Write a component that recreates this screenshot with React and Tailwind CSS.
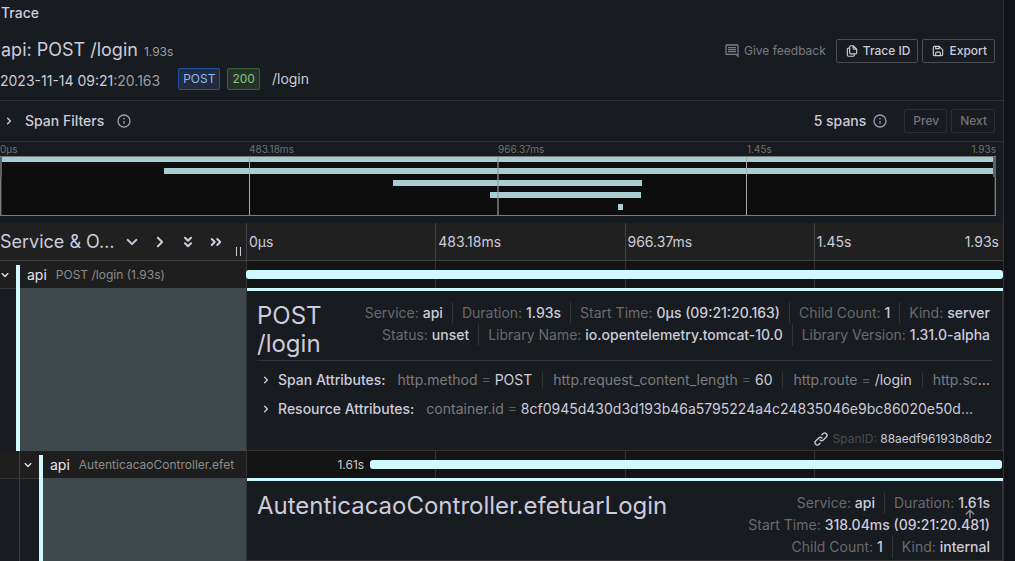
import { MdOutlineComment } from "react-icons/md";

const PATHS = {
  copy: "M21,8.94a1.31,1.31,0,0,0-.06-.27l0-.09a1.07,1.07,0,0,0-.19-.28h0l-6-6h0a1.07,1.07,0,0,0-.28-.19.32.32,0,0,0-.09,0A.88.88,0,0,0,14.05,2H10A3,3,0,0,0,7,5V6H6A3,3,0,0,0,3,9V19a3,3,0,0,0,3,3h8a3,3,0,0,0,3-3V18h1a3,3,0,0,0,3-3V9S21,9,21,8.94ZM15,5.41,17.59,8H16a1,1,0,0,1-1-1ZM15,19a1,1,0,0,1-1,1H6a1,1,0,0,1-1-1V9A1,1,0,0,1,6,8H7v7a3,3,0,0,0,3,3h5Zm4-4a1,1,0,0,1-1,1H10a1,1,0,0,1-1-1V5a1,1,0,0,1,1-1h3V7a3,3,0,0,0,3,3h3Z",
  save: "m20.71 9.29-6-6a1 1 0 0 0-.32-.21A1.09 1.09 0 0 0 14 3H6a3 3 0 0 0-3 3v12a3 3 0 0 0 3 3h12a3 3 0 0 0 3-3v-8a1 1 0 0 0-.29-.71ZM9 5h4v2H9Zm6 14H9v-3a1 1 0 0 1 1-1h4a1 1 0 0 1 1 1Zm4-1a1 1 0 0 1-1 1h-1v-3a3 3 0 0 0-3-3h-4a3 3 0 0 0-3 3v3H6a1 1 0 0 1-1-1V6a1 1 0 0 1 1-1h1v3a1 1 0 0 0 1 1h6a1 1 0 0 0 1-1V6.41l4 4Z",
  info: "M12,2A10,10,0,1,0,22,12,10.01114,10.01114,0,0,0,12,2Zm0,18a8,8,0,1,1,8-8A8.00917,8.00917,0,0,1,12,20Zm0-8.5a1,1,0,0,0-1,1v3a1,1,0,0,0,2,0v-3A1,1,0,0,0,12,11.5Zm0-4a1.25,1.25,0,1,0,1.25,1.25A1.25,1.25,0,0,0,12,7.5Z",
  down: "M17,9.17a1,1,0,0,0-1.41,0L12,12.71,8.46,9.17a1,1,0,0,0-1.41,0,1,1,0,0,0,0,1.42l4.24,4.24a1,1,0,0,0,1.42,0L17,10.59A1,1,0,0,0,17,9.17Z",
  right: "M14.83,11.29,10.59,7.05a1,1,0,0,0-1.42,0,1,1,0,0,0,0,1.41L12.71,12,9.17,15.54a1,1,0,0,0,0,1.41,1,1,0,0,0,.71.29,1,1,0,0,0,.71-.29l4.24-4.24A1,1,0,0,0,14.83,11.29Z",
  doubleRight: "M8.46,8.29A1,1,0,1,0,7,9.71L9.34,12,7,14.29a1,1,0,0,0,0,1.42,1,1,0,0,0,.71.29,1,1,0,0,0,.75-.29l3-3a1,1,0,0,0,0-1.42Zm8.5,3-3-3a1,1,0,0,0-1.42,1.42L14.84,12l-2.3,2.29a1,1,0,0,0,0,1.42,1,1,0,0,0,.71.29,1,1,0,0,0,.71-.29l3-3A1,1,0,0,0,17,11.29Z",
  link: "M10,17.55,8.23,19.27a2.47,2.47,0,0,1-3.5-3.5l4.54-4.55a2.46,2.46,0,0,1,3.39-.09l.12.1a1,1,0,0,0,1.4-1.43A2.75,2.75,0,0,0,14,9.59a4.46,4.46,0,0,0-6.09.22L3.31,14.36a4.48,4.48,0,0,0,6.33,6.33L11.37,19A1,1,0,0,0,10,17.55ZM20.69,3.31a4.49,4.49,0,0,0-6.33,0L12.63,5A1,1,0,0,0,14,6.45l1.73-1.72a2.47,2.47,0,0,1,3.5,3.5l-4.54,4.55a2.46,2.46,0,0,1-3.39.09l-.12-.1a1,1,0,0,0-1.4,1.43,2.75,2.75,0,0,0,.23.21,4.47,4.47,0,0,0,6.09-.22l4.55-4.55A4.49,4.49,0,0,0,20.69,3.31Z",
  up: "M17.71,11.29l-5-5a1,1,0,0,0-.33-.21,1,1,0,0,0-.76,0,1,1,0,0,0-.33.21l-5,5a1,1,0,0,0,1.42,1.42L11,9.41V17a1,1,0,0,0,2,0V9.41l3.29,3.3a1,1,0,0,0,1.42,0A1,1,0,0,0,17.71,11.29Z",
};

function Icon({ name, className = "size-4" }) {
  return (
    <svg viewBox="0 0 24 24" fill="currentColor" aria-hidden="true" className={`shrink-0 ${className}`}>
      <path d={PATHS[name]} />
    </svg>
  );
}

function IconButton({ label, name, className }) {
  return (
    <button type="button" aria-label={label} className="flex shrink-0 items-center">
      <Icon name={name} className={className} />
    </button>
  );
}

const TICKS = ["0μs", "483.18ms", "966.37ms", "1.45s"];
const END = "1.93s";

const MINIMAP_BARS = [
  { x: 2, y: 1, w: 991, h: 5 },
  { x: 164, y: 12, w: 829, h: 6 },
  { x: 393, y: 24, w: 249, h: 6 },
  { x: 490, y: 36, w: 151, h: 6 },
  { x: 618, y: 48, w: 5, h: 6 },
];

function Minimap() {
  return (
    <div className="pr-[7px]">
      <div className="grid h-[14px] grid-cols-4 text-[10px] leading-[14px] text-[#717171]">
        {TICKS.map((t, i) => (
          <div key={t} className="flex justify-between">
            <span>{t}</span>
            {i === 3 && <span>{END}</span>}
          </div>
        ))}
      </div>
      <svg viewBox="0 0 996 60" preserveAspectRatio="none" className="block h-15 w-full" shapeRendering="crispEdges">
        <rect width="996" height="60" fill="#7a7a7a" />
        <rect x="1" y="1" width="994" height="58" fill="#0d0d0d" />
        <rect x="1" y="1" width="1" height="58" fill="#3a3a3a" />
        <rect x="994" y="1" width="1" height="58" fill="#3a3a3a" />
        {MINIMAP_BARS.map((b) => (
          <rect key={b.y} x={b.x} y={b.y} width={b.w} height={b.h} fill="#a8cdd0" />
        ))}
        <rect x="249" y="1" width="1" height="58" fill="#aaaaaa" />
        <rect x="497" y="1" width="2" height="58" fill="#999999" fillOpacity="0.6" />
        <rect x="746" y="1" width="1" height="58" fill="#aaaaaa" />
        <rect x="0" y="1" width="2" height="20" fill="#606060" />
        <rect x="993" y="1" width="3" height="20" fill="#606060" />
      </svg>
    </div>
  );
}

function SpanRow({ nested, service, operation, label, start, width }) {
  return (
    <div className="flex h-[27px]">
      <div className="flex w-[246px] shrink-0 bg-[#1e1e1e]">
        {nested && <div className="w-5 shrink-0 border-r border-[#404040]" />}
        <button
          type="button"
          aria-label={`Collapse ${service}`}
          className={`flex shrink-0 items-center justify-center text-[#e4e4ee] ${nested ? "w-[19px] pr-[3px]" : "w-4 pr-[6px]"}`}
        >
          <Icon name="down" className="size-4" />
        </button>
        <div className="mt-1 flex min-w-0 flex-1 items-center gap-[9px] overflow-hidden border-l-4 border-[#cff9ff] pb-1 pl-[7px] whitespace-nowrap">
          <span className="text-sm text-[#e6e6ea]">{service}</span>
          <span className="text-xs text-[#8c8c8c]">{operation}</span>
        </div>
      </div>
      <div className="relative min-w-0 flex-1 bg-[#141414]">
        <div className="absolute inset-0 grid grid-cols-4">
          {TICKS.map((t) => (
            <div key={t} className="border-l border-[#343434]" />
          ))}
        </div>
        <div className="relative flex h-full items-center">
          <div className="flex justify-end text-xs text-[#cbcbd3]" style={{ width: `${start}%` }}>
            {label && <span className="pr-[6px]">{label}</span>}
          </div>
          <div className="h-[9px] rounded-[3px] bg-[#cff9ff]" style={{ width: `${width}%` }} />
        </div>
      </div>
    </div>
  );
}

function Overview({ items }) {
  return (
    <ul className="flex min-w-0 flex-1 flex-wrap content-start justify-end text-sm leading-[22px] text-[#6a6a6e]">
      {items.map(([k, v, last]) => (
        <li key={k} className={`whitespace-nowrap pl-[9px] ${last ? "" : "border-r border-[#333336] pr-[9px]"}`}>
          {k}: <span className="font-medium text-[#ccccdc]">{v}</span>
        </li>
      ))}
    </ul>
  );
}

function AttributeRow({ title, items }) {
  return (
    <div className="flex h-[29px] items-center pl-px text-sm leading-4">
      <button type="button" className="flex shrink-0 items-center gap-1 font-medium text-[#ccccdc]">
        <Icon name="right" className="size-4" />
        {title}:
      </button>
      <ul className="flex min-w-0 overflow-hidden pl-[2px] whitespace-nowrap text-[#7c7c80]">
        {items.map(([k, v], i) => (
          <li key={k} className={`px-[10px] ${i < items.length - 1 ? "border-r border-[#333336]" : ""}`}>
            {k}
            {v && <span className="text-[#5c5c60]"> = </span>}
            <span className="text-[#ccccdc]">{v || "…"}</span>
          </li>
        ))}
      </ul>
    </div>
  );
}

function SpanDetail({ nested, title, overview, children }) {
  return (
    <div className={`flex ${nested ? "flex-1" : ""}`}>
      <div className="flex w-[246px] shrink-0 border-t border-[#343434]">
        {nested && <div className="w-5 shrink-0 border-r border-[#404040]" />}
        <div className={`shrink-0 ${nested ? "w-[19px]" : "w-4"}`} />
        <div className="-mt-px flex-1 border-l-4 border-[#cff9ff] bg-[#3e484d]" />
      </div>
      <div className="flex min-w-0 flex-1 flex-col border-b border-l border-[#343434]">
        <div className="h-[3px] bg-[#cff9ff]" />
        <div className="flex-1 border-r border-[#343434] px-[10px] pt-[11px]">
          <div className="flex pr-[2px]">
            <h2 className="w-min text-2xl leading-7 text-[#ccccdc]">{title}</h2>
            <Overview items={overview} />
          </div>
          {children}
        </div>
      </div>
    </div>
  );
}

const outlineButton =
  "flex h-6 items-center gap-1 rounded-xs border border-[#4b4c54] pr-[7px] pl-2 text-xs font-medium text-[#ccccdc]";
const disabledButton =
  "h-6 rounded-xs border border-[#2d2f34] pr-[7px] pl-2 text-xs font-medium text-[#72737c]";

export default function App() {
  return (
    <div className="flex h-screen overflow-hidden bg-[#111217] pr-[11px] font-['Inter',sans-serif] text-sm text-[#ccccdc]">
      <main className="relative flex min-w-0 flex-1 flex-col border-r border-[#2e3035] bg-[#181b1f]">
        <h6 className="px-px pt-[3px] text-sm leading-5 font-medium">Trace</h6>

        <header className="mt-3 flex h-[66px] justify-between border-b border-[#2e3035] pr-2">
          <div>
            <h1 className="flex items-baseline gap-[6px] px-px text-lg leading-[30px]">
              api: POST /login
              <small className="text-xs text-[#9d9da8]">1.93s</small>
            </h1>
            <div className="flex h-7 items-center">
              <time className="pt-1">
                2023-11-14 09:21<span className="text-[#9d9da8]">:20.163</span>
              </time>
              <span className="ml-[18px] flex h-[22px] items-center rounded-xs border border-[#1f51a4] bg-[#222c3e] px-1 text-xs text-[#8fb8f5]">
                POST
              </span>
              <span className="ml-[7px] flex h-[22px] items-center rounded-xs border border-[#33642f] bg-[#25312a] px-1 text-xs text-[#85c67d]">
                200
              </span>
              <span className="ml-3">/login</span>
            </div>
          </div>
          <div className="mt-1 flex h-6 items-center">
            <a href="#feedback" className="mr-[10px] flex items-center gap-1 text-xs text-[#797b83]">
              <MdOutlineComment className="size-4" />
              Give feedback
            </a>
            <button type="button" className={outlineButton}>
              <Icon name="copy" className="size-[14px]" />
              Trace ID
            </button>
            <button type="button" className={`ml-1 ${outlineButton}`}>
              <Icon name="save" className="size-[14px]" />
              Export
            </button>
          </div>
        </header>

        <div className="flex h-[41px] items-center border-b border-[#2e3035] pr-2 pl-px">
          <button type="button" className="flex items-center gap-2 pb-px font-medium">
            <Icon name="right" className="size-4" />
            Span Filters
          </button>
          <Icon name="info" className="ml-3 size-4 text-[#9d9da8]" />
          <span className="ml-auto font-medium">5 spans</span>
          <Icon name="info" className="ml-[6px] size-4 text-[#9d9da8]" />
          <button type="button" disabled className={`ml-4 ${disabledButton}`}>
            Prev
          </button>
          <button type="button" disabled className={`ml-1 ${disabledButton}`}>
            Next
          </button>
        </div>

        <Minimap />

        <div className="mt-[7px] flex h-[38px] shrink-0 border-b border-[#404040] bg-[#202020]">
          <div className="flex w-[246px] shrink-0 items-center">
            <span className="text-lg">Service &amp; O…</span>
            <div className="ml-[5px] flex gap-1">
              <IconButton label="Expand +1" name="down" className="size-6" />
              <IconButton label="Collapse +1" name="right" className="size-6" />
              <IconButton label="Expand all" name="doubleRight" className="size-6 rotate-90" />
              <IconButton label="Collapse all" name="doubleRight" className="size-6" />
            </div>
            <div className="mt-5 mr-[5px] ml-auto h-[9px] w-[5px] border-x border-[#cccccc]" />
          </div>
          <div className="grid flex-1 grid-cols-4">
            {TICKS.map((t, i) => (
              <div key={t} className="flex items-center justify-between border-l border-[#404040] pr-1 pl-[2px]">
                <span>{t}</span>
                {i === 3 && <span>{END}</span>}
              </div>
            ))}
          </div>
        </div>

        <SpanRow service="api" operation="POST /login (1.93s)" start={0} width={100} />
        <SpanDetail
          title="POST /login"
          overview={[
            ["Service", "api"],
            ["Duration", "1.93s"],
            ["Start Time", "0μs (09:21:20.163)"],
            ["Child Count", "1"],
            ["Kind", "server", true],
            ["Status", "unset"],
            ["Library Name", "io.opentelemetry.tomcat-10.0"],
            ["Library Version", "1.31.0-alpha", true],
          ]}
        >
          <div className="mt-[2px] border-t border-[#333336] pt-1">
            <AttributeRow
              title="Span Attributes"
              items={[
                ["http.method", "POST"],
                ["http.request_content_length", "60"],
                ["http.route", "/login"],
                ["http.sc"],
              ]}
            />
            <AttributeRow
              title="Resource Attributes"
              items={[["container.id", "8cf0945d430d3d193b46a5795224a4c24835046e9bc86020e50d…"]]}
            />
          </div>
          <div className="flex h-[27px] items-center justify-end gap-1 pt-1 text-xs">
            <Icon name="link" className="size-4" />
            <span>
              <span className="text-[#4c4c50]">SpanID:</span> 88aedf96193b8db2
            </span>
          </div>
        </SpanDetail>

        <SpanRow
          nested
          service="api"
          operation="AutenticacaoController.efet"
          label="1.61s"
          start={16.4}
          width={83.5}
        />
        <SpanDetail
          nested
          title="AutenticacaoController.efetuarLogin"
          overview={[
            ["Service", "api"],
            ["Duration", "1.61s", true],
            ["Start Time", "318.04ms (09:21:20.481)", true],
            ["Child Count", "1"],
            ["Kind", "internal", true],
          ]}
        />

        <button type="button" aria-label="Scroll to top" className="absolute right-6 bottom-[38px] text-[#8e8f99]">
          <Icon name="up" className="size-[18px]" />
        </button>
      </main>
    </div>
  );
}
